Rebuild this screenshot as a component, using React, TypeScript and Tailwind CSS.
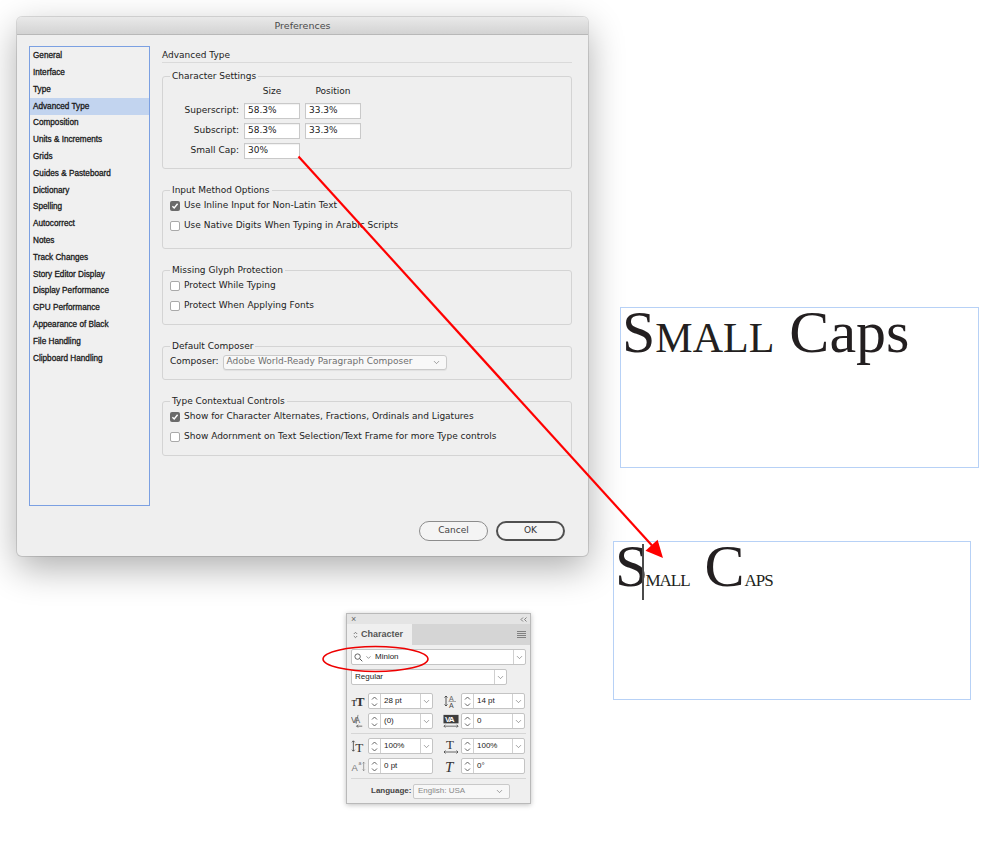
import { ChevronDown } from 'lucide-react';

const sidebarItems = [
  'General',
  'Interface',
  'Type',
  'Advanced Type',
  'Composition',
  'Units & Increments',
  'Grids',
  'Guides & Pasteboard',
  'Dictionary',
  'Spelling',
  'Autocorrect',
  'Notes',
  'Track Changes',
  'Story Editor Display',
  'Display Performance',
  'GPU Performance',
  'Appearance of Black',
  'File Handling',
  'Clipboard Handling',
];

function Group({ title, className, children }: { title: string; className: string; children: React.ReactNode }) {
  return (
    <fieldset className={'rounded-[3px] border border-[#d4d4d4] px-[7px] ' + className}>
      <legend className="px-[2px] text-[9px] leading-[12px] text-[#222]">{title}</legend>
      {children}
    </fieldset>
  );
}

function Check({ checked, label }: { checked?: boolean; label: string }) {
  return (
    <div className="flex h-4 items-center gap-[4px]">
      {checked ? (
        <span className="flex h-[10px] w-[10px] items-center justify-center rounded-[2px] bg-[#6b6b6b]">
          <svg width="8" height="8" viewBox="0 0 8 8">
            <path d="M1.4 4.2 3.2 6 6.6 1.8" stroke="white" strokeWidth="1.4" fill="none" />
          </svg>
        </span>
      ) : (
        <span className="h-[10px] w-[10px] rounded-[2px] border border-[#a9a9a9] bg-white" />
      )}
      <span className="text-[9px] text-[#222]">{label}</span>
    </div>
  );
}

function PctInput({ value }: { value: string }) {
  return (
    <div className="flex h-4 items-center border border-[#c9c9c9] bg-white pl-[3px] text-[9px] text-[#222] shadow-[inset_0_1px_1px_rgba(0,0,0,0.06)]">
      {value}
    </div>
  );
}

function Stepper() {
  return (
    <span className="flex w-[12px] items-center justify-center border-r border-[#d0d0d0]">
      <svg width="7" height="11" viewBox="0 0 7 11">
        <path d="M1 3.5 3.5 1 6 3.5M1 7.5 3.5 10 6 7.5" stroke="#555" strokeWidth="0.9" fill="none" />
      </svg>
    </span>
  );
}

function Drop() {
  return (
    <span className="flex w-[12px] items-center justify-center border-l border-[#d0d0d0]">
      <ChevronDown size={9} strokeWidth={1.6} color="#666" />
    </span>
  );
}

function Field({ value, width, dropdown = true }: { value: string; width: string; dropdown?: boolean }) {
  return (
    <div className={'flex h-4 rounded-[2px] border border-[#c4c4c4] bg-white ' + width}>
      <Stepper />
      <span className="flex flex-1 items-center pl-[3px] text-[8px] text-[#222]">{value}</span>
      {dropdown && <Drop />}
    </div>
  );
}

const serif = 'Liberation Serif, serif';

function IconFontSize() {
  return (
    <svg width="16" height="16" viewBox="0 0 16 16">
      <text x="0.5" y="13.5" fontSize="8" fontFamily={serif} fontWeight="bold" fill="#333">T</text>
      <text x="5" y="13.5" fontSize="14" fontFamily={serif} fontWeight="bold" fill="#333">T</text>
    </svg>
  );
}

function IconLeading() {
  return (
    <svg width="16" height="16" viewBox="0 0 16 16">
      <path d="M3 3v10M1.5 4.5 3 3l1.5 1.5M1.5 11.5 3 13l1.5-1.5" stroke="#444" strokeWidth="0.9" fill="none" />
      <text x="6" y="7.5" fontSize="7" fontFamily="Liberation Sans, sans-serif" fill="#666">A</text>
      <line x1="5.5" y1="8.5" x2="13" y2="8.5" stroke="#777" strokeWidth="0.6" />
      <text x="6" y="15" fontSize="7" fontFamily="Liberation Sans, sans-serif" fill="#444">A</text>
    </svg>
  );
}

function IconKerning() {
  return (
    <svg width="16" height="16" viewBox="0 0 16 16">
      <text x="0" y="10" fontSize="9" fontFamily="Liberation Sans, sans-serif" letterSpacing="-1.6" fill="#555">VA</text>
      <line x1="7.5" y1="1.5" x2="5.5" y2="11" stroke="#555" strokeWidth="0.7" />
      <path d="M12 13.5H6M7.5 12 6 13.5 7.5 15" stroke="#444" strokeWidth="0.8" fill="none" />
    </svg>
  );
}

function IconTracking() {
  return (
    <svg width="17" height="16" viewBox="0 0 17 16">
      <rect x="0.5" y="1.5" width="16" height="9" fill="#3e3e3e" />
      <text x="2" y="9.5" fontSize="8.5" fontFamily="Liberation Sans, sans-serif" fontWeight="bold" letterSpacing="-0.8" fill="#fff">VA</text>
      <path d="M1 13.5h15M2.5 12 1 13.5 2.5 15M14.5 12 16 13.5 14.5 15" stroke="#444" strokeWidth="0.8" fill="none" />
    </svg>
  );
}

function IconVScale() {
  return (
    <svg width="16" height="16" viewBox="0 0 16 16">
      <path d="M2.5 2.5v11M1 4 2.5 2.5 4 4M1 12 2.5 13.5 4 12" stroke="#444" strokeWidth="0.9" fill="none" />
      <text x="4.5" y="14" fontSize="14" fontFamily={serif} fill="#333">T</text>
    </svg>
  );
}

function IconHScale() {
  return (
    <svg width="16" height="16" viewBox="0 0 16 16">
      <text x="3" y="11" fontSize="13" fontFamily={serif} fill="#333">T</text>
      <path d="M1 14h14M2.5 12.5 1 14l1.5 1.5M13.5 12.5 15 14l-1.5 1.5" stroke="#444" strokeWidth="0.8" fill="none" />
    </svg>
  );
}

function IconBaseline() {
  return (
    <svg width="16" height="16" viewBox="0 0 16 16">
      <text x="0.5" y="13" fontSize="10" fontFamily="Liberation Sans, sans-serif" fill="#777">A</text>
      <text x="8" y="7" fontSize="5.5" fontFamily="Liberation Sans, sans-serif" fill="#777">a</text>
      <path d="M13.5 4v9M12.3 5.2 13.5 4l1.2 1.2M12.3 11.8 13.5 13l1.2-1.2" stroke="#777" strokeWidth="0.7" fill="none" />
    </svg>
  );
}

function IconSkew() {
  return (
    <svg width="16" height="16" viewBox="0 0 16 16">
      <text x="2" y="14" fontSize="15" fontFamily={serif} fontStyle="italic" fill="#333">T</text>
    </svg>
  );
}

function PanelRow({
  leftIcon,
  left,
  rightIcon,
  right,
  dropdown = true,
}: {
  leftIcon: React.ReactNode;
  left: string;
  rightIcon: React.ReactNode;
  right: string;
  dropdown?: boolean;
}) {
  return (
    <div className="flex h-4 items-center">
      <span className="flex w-[15px] justify-center">{leftIcon}</span>
      <span className="ml-[2px]">
        <Field value={left} width="w-[65px]" dropdown={dropdown} />
      </span>
      <span className="ml-[10px] flex w-[16px] justify-center">{rightIcon}</span>
      <span className="ml-[2px]">
        <Field value={right} width="w-[64px]" dropdown={dropdown} />
      </span>
    </div>
  );
}

function CharacterPanel() {
  return (
    <div className="absolute left-[346px] top-[613px] w-[185px] border border-[#b9b9b9] bg-[#efefef] font-['Liberation_Sans',sans-serif] shadow-[0_1px_5px_rgba(0,0,0,0.25)]">
      <div className="flex h-[10px] items-center justify-between bg-[#e4e4e4] pl-[4px] pr-[3px] text-[#666]">
        <span className="text-[9px] leading-none">×</span>
        <svg width="7" height="5" viewBox="0 0 7 5">
          <path d="M3 0.5 1 2.5 3 4.5M6.5 0.5 4.5 2.5 6.5 4.5" stroke="#666" strokeWidth="0.8" fill="none" />
        </svg>
      </div>
      <div className="flex h-[21px] items-stretch justify-between bg-[#d5d5d5]">
        <div className="flex w-[65px] items-center gap-[3px] bg-[#efefef] pl-[6px]">
          <svg width="5" height="8" viewBox="0 0 5 8">
            <path d="M0.8 3 2.5 1.3 4.2 3M0.8 5 2.5 6.7 4.2 5" stroke="#666" strokeWidth="0.8" fill="none" />
          </svg>
          <span className="text-[9px] font-bold text-[#555]">Character</span>
        </div>
        <div className="flex items-center pr-[4px]">
          <svg width="9" height="7" viewBox="0 0 9 7">
            <path d="M0 0.5h9M0 2.5h9M0 4.5h9M0 6.5h9" stroke="#777" strokeWidth="0.9" />
          </svg>
        </div>
      </div>
      <div className="flex flex-col px-[4px] pb-[4px] pt-[4px]">
        <div className="flex h-4 w-[175px] rounded-[2px] border border-[#c4c4c4] bg-white">
          <span className="flex flex-1 items-center gap-[2px] pl-[2px]">
            <svg width="9" height="9" viewBox="0 0 9 9">
              <circle cx="3.6" cy="3.6" r="2.7" stroke="#555" strokeWidth="0.9" fill="none" />
              <path d="M5.6 5.6 8.3 8.3" stroke="#555" strokeWidth="1" />
            </svg>
            <ChevronDown size={7} strokeWidth={2} color="#555" />
            <span className="ml-[1px] text-[8px] text-[#222]">Minion</span>
          </span>
          <Drop />
        </div>
        <div className="mt-[4px] flex h-4 w-[156px] rounded-[2px] border border-[#c4c4c4] bg-white">
          <span className="flex flex-1 items-center pl-[3px] text-[8px] text-[#222]">Regular</span>
          <Drop />
        </div>
        <div className="mt-[8px] flex flex-col gap-[4px]">
          <PanelRow leftIcon={<IconFontSize />} left="28 pt" rightIcon={<IconLeading />} right="14 pt" />
          <PanelRow leftIcon={<IconKerning />} left="(0)" rightIcon={<IconTracking />} right="0" />
        </div>
        <div className="mt-[4px] h-px bg-[#d6d6d6]" />
        <div className="mt-[4px] flex flex-col gap-[4px]">
          <PanelRow leftIcon={<IconVScale />} left="100%" rightIcon={<IconHScale />} right="100%" />
          <PanelRow leftIcon={<IconBaseline />} left="0 pt" rightIcon={<IconSkew />} right="0°" dropdown={false} />
        </div>
        <div className="mt-[4px] h-px bg-[#d6d6d6]" />
        <div className="mt-[4px] flex h-4 items-center">
          <span className="ml-[20px] w-[42px] text-[8px] font-bold text-[#444]">Language:</span>
          <div className="flex h-[15px] w-[97px] items-center justify-between rounded-[2px] border border-[#c9c9c9] bg-[#f7f7f7] pl-[4px] pr-[5px]">
            <span className="text-[8px] text-[#888]">English: USA</span>
            <ChevronDown size={9} strokeWidth={1.6} color="#666" />
          </div>
        </div>
      </div>
    </div>
  );
}

function PreferencesDialog() {
  return (
    <div className="absolute left-[17px] top-[17px] w-[571px] overflow-hidden rounded-[5px] bg-[#efefef] font-['DejaVu_Sans',sans-serif] shadow-[0_12px_36px_rgba(0,0,0,0.32),0_0_0_1px_rgba(0,0,0,0.12)]">
      <div className="flex h-[18px] items-center justify-center border-b border-[#b8b8b8] bg-gradient-to-b from-[#e9e9e9] to-[#d3d3d3] pt-[2px]">
        <span className="text-[9.5px] text-[#4a4a4a]">Preferences</span>
      </div>
      <div className="flex gap-[12px] pl-[12px] pt-[11px]">
        <div className="h-[460px] w-[121px] border border-[#7ba0e2] bg-[#f0f0f0] pt-[1px] font-['Liberation_Sans',sans-serif]">
          {sidebarItems.map((item) => (
            <div
              key={item}
              className={[
                'flex h-[16.8px] items-center pl-[3px] text-[8.2px] text-[#1a1a1a] [-webkit-text-stroke:0.3px_#1a1a1a]',
                item === 'Advanced Type' ? 'bg-[#c2d4ef]' : '',
              ].join(' ')}
            >
              {item}
            </div>
          ))}
        </div>
        <div className="w-[410px]">
          <div className="border-b border-[#dadada] pb-[1px] pt-[3px] text-[9px] leading-[12px] text-[#222]">Advanced Type</div>

          <Group title="Character Settings" className="mt-[7px] pb-[9px] pt-[4px]">
            <div className="grid grid-cols-[69px_56px_56px] gap-x-[5px] text-[9px] text-[#222]">
              <span />
              <span className="flex h-3 items-center justify-center">Size</span>
              <span className="flex h-3 items-center justify-center">Position</span>
            </div>
            <div className="mt-[5px] grid grid-cols-[69px_56px_56px] gap-x-[5px] gap-y-[4px] text-[9px] text-[#222]">
              <span className="flex h-4 items-center justify-end">Superscript:</span>
              <PctInput value="58.3%" />
              <PctInput value="33.3%" />
              <span className="flex h-4 items-center justify-end">Subscript:</span>
              <PctInput value="58.3%" />
              <PctInput value="33.3%" />
              <span className="flex h-4 items-center justify-end">Small Cap:</span>
              <PctInput value="30%" />
            </div>
          </Group>

          <Group title="Input Method Options" className="mt-[15px] pb-[14px] pt-[2px]">
            <div className="flex flex-col gap-[4px]">
              <Check checked label="Use Inline Input for Non-Latin Text" />
              <Check label="Use Native Digits When Typing in Arabic Scripts" />
            </div>
          </Group>

          <Group title="Missing Glyph Protection" className="mt-[15px] pb-[10px] pt-[2px]">
            <div className="flex flex-col gap-[4px]">
              <Check label="Protect While Typing" />
              <Check label="Protect When Applying Fonts" />
            </div>
          </Group>

          <Group title="Default Composer" className="mt-[15px] pb-[9px] pt-[2px]">
            <div className="flex h-4 items-center gap-[4px] text-[9px] text-[#222]">
              <span>Composer:</span>
              <div className="flex h-[15px] w-[224px] items-center justify-between rounded-[3px] border border-[#cacaca] bg-[#f8f8f8] pl-[3px] pr-[5px] shadow-[0_1px_1px_rgba(0,0,0,0.06)]">
                <span className="text-[#6f6f6f]">Adobe World-Ready Paragraph Composer</span>
                <ChevronDown size={9} strokeWidth={1.6} color="#666" />
              </div>
            </div>
          </Group>

          <Group title="Type Contextual Controls" className="mt-[15px] pb-[10px] pt-[2px]">
            <div className="flex flex-col gap-[4px]">
              <Check checked label="Show for Character Alternates, Fractions, Ordinals and Ligatures" />
              <Check label="Show Adornment on Text Selection/Text Frame for more Type controls" />
            </div>
          </Group>
        </div>
      </div>
      <div className="mt-[15px] flex justify-end gap-[8px] pb-[15px] pr-[23px]">
        <button type="button" className="h-[20px] w-[69px] rounded-full border border-[#8c8c8c] bg-[#f4f4f4] text-[9px] text-[#444]">
          Cancel
        </button>
        <button type="button" className="h-[20px] w-[69px] rounded-full border-2 border-[#505050] bg-[#f4f4f4] text-[9px] text-[#333]">
          OK
        </button>
      </div>
    </div>
  );
}

export default function App() {
  return (
    <div className="relative h-[845px] w-[999px] overflow-hidden bg-white">
      <PreferencesDialog />

      <div className="absolute left-[620px] top-[307px] h-[161px] w-[359px] border border-[#b7d1f6] bg-white">
        <div className="pl-[1px] font-['Liberation_Serif',serif] text-[60px] leading-[48px] text-[#231f20]">
          <span className="[font-variant-caps:small-caps]">Small</span> Caps
        </div>
      </div>

      <div className="absolute left-[613px] top-[541px] h-[159px] w-[358px] border border-[#b7d1f6] bg-white">
        <div className="pl-[1px] font-['Liberation_Serif',serif] text-[60px] leading-[48px] text-[#231f20]">
          S
          <span className="-ml-[6px] mr-[1px] inline-block h-[56px] w-[2px] bg-[#4b4b4b] align-[-14px]" />
          <span className="text-[17px] tracking-[-1px]">MALL</span> C<span className="text-[17px] tracking-[-1px]">APS</span>
        </div>
      </div>

      <CharacterPanel />

      <svg className="pointer-events-none absolute inset-0" width="999" height="845" viewBox="0 0 999 845">
        <line x1="298.5" y1="156.5" x2="652" y2="545.5" stroke="#f00" strokeWidth="2.2" />
        <polygon points="663,558 645.5,550.8 657.6,539.8" fill="#f00" />
        <ellipse cx="375.5" cy="659" rx="52.5" ry="12.5" stroke="#e00" strokeWidth="1.5" fill="none" />
      </svg>
    </div>
  );
}
